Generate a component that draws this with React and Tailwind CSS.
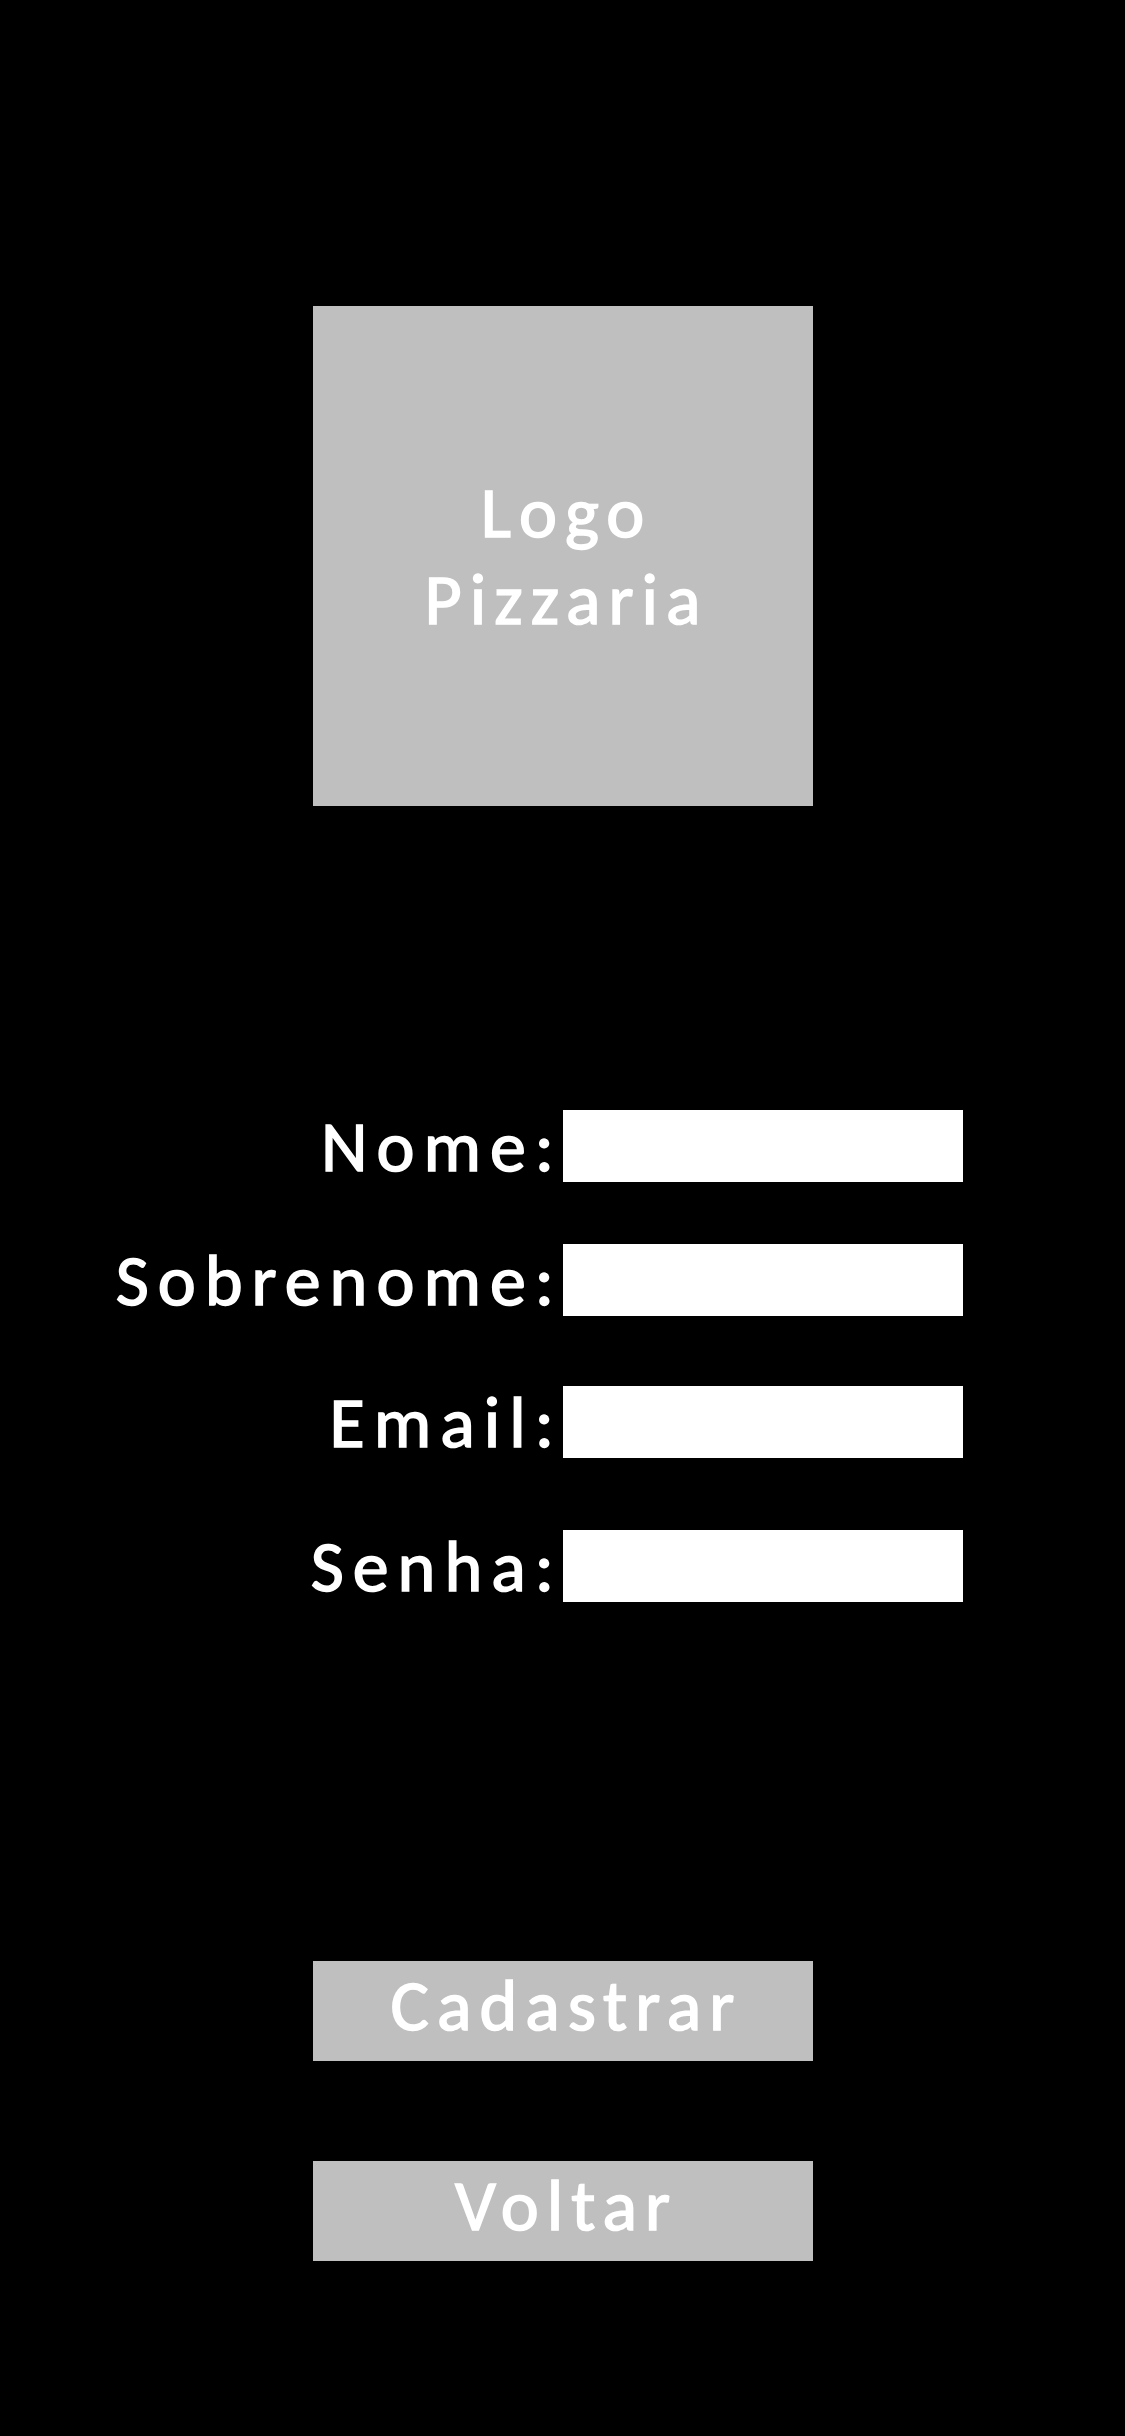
import React from "react";

const font = { fontFamily: "Carlito, Lato, 'Open Sans', sans-serif" };

const Field = ({ label, type = "text", className = "" }) => (
    <div className={`grid grid-cols-[563px_400px] items-center ${className}`}>
        <label className="text-right text-[72px] leading-none tracking-[9px] text-white [-webkit-text-stroke:1.5px_white]">{label}</label>
        <input type={type} className="h-[72px] w-[400px] bg-white outline-none" />
    </div>
);

export default function App() {
    return (
        <div className="min-h-[2436px] w-full bg-black flex flex-col" style={font}>
            <div className="mx-auto mt-[306px] flex h-[500px] w-[500px] flex-col items-center justify-center bg-[#bfbfbf] text-[72px] leading-[87px] tracking-[8px] text-white [-webkit-text-stroke:1.5px_white]">
                <span className="pl-[8px]">Logo</span>
                <span className="pl-[8px]">Pizzaria</span>
            </div>

            <form className="mt-[304px] flex flex-col" onSubmit={(e) => e.preventDefault()}>
                <Field label="Nome:" />
                <Field label="Sobrenome:" className="mt-[62px]" />
                <Field label="Email:" type="email" className="mt-[70px]" />
                <Field label="Senha:" type="password" className="mt-[72px]" />

                <button type="submit"
                        className="mx-auto mt-[359px] h-[100px] w-[500px] bg-[#bfbfbf] pb-[12px] pl-[8px] text-[72px] leading-none tracking-[8px] text-white [-webkit-text-stroke:1.5px_white]">
                    Cadastrar
                </button>
                <button type="button"
                        className="mx-auto mt-[100px] h-[100px] w-[500px] bg-[#bfbfbf] pb-[12px] pl-[8px] text-[72px] leading-none tracking-[8px] text-white [-webkit-text-stroke:1.5px_white]">
                    Voltar
                </button>
            </form>
        </div>
    );
}
